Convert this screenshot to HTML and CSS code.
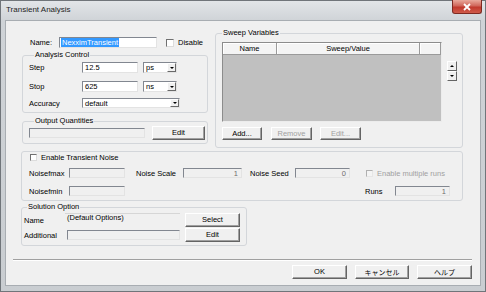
FILE: index.html
```html
<!DOCTYPE html>
<html>
<head>
<meta charset="utf-8">
<link rel="stylesheet" href="styles.css">
</head>
<body>
<div class="window">
  <div class="titlebar">
    <span class="title">Transient Analysis</span>
    <span class="close"><svg width="10" height="8" viewBox="0 0 10 8"><path d="M2 1 L8 7 M8 1 L2 7" stroke="#fff" stroke-width="1.8"/></svg></span>
  </div>
  <div class="client">
    <div class="top">
      <div class="leftcol">
        <div class="name-row">
          <span class="lbl name-lbl">Name:</span>
          <span class="input name-input"><span class="sel">NexximTransient</span></span>
          <span class="check cb-disable"></span><span class="check-lbl">Disable</span>
        </div>
        <div class="group analysis">
          <div class="legend">Analysis Control</div>
          <div class="row r-step"><span class="lbl w53">Step</span><span class="input w56">12.5</span><span class="select w34 ml5"><span class="val">ps</span><span class="arrow"><i></i></span></span></div>
          <div class="row r-stop"><span class="lbl w53">Stop</span><span class="input w56">625</span><span class="select w34 ml5"><span class="val">ns</span><span class="arrow"><i></i></span></span></div>
          <div class="row r-acc"><span class="lbl w53">Accuracy</span><span class="select w98"><span class="val">default</span><span class="arrow"><i></i></span></span></div>
        </div>
        <div class="group output">
          <div class="legend">Output Quantities</div>
          <div class="row r-out"><span class="input disabled w116"></span><span class="btn w53 ml7">Edit</span></div>
        </div>
      </div>
      <div class="group sweep">
        <div class="legend leg-sweep">Sweep Variables</div>
        <div class="table-row">
          <div class="table">
            <div class="thead"><span class="th c1">Name</span><span class="th c2">Sweep/Value</span><span class="th c3"></span></div>
            <div class="tbody"></div>
          </div>
          <div class="arrows">
            <span class="abtn"><i class="up"></i></span>
            <span class="abtn"><i class="down"></i></span>
          </div>
        </div>
        <div class="sweep-btns">
          <span class="btn w40">Add...</span>
          <span class="btn w41 ml9 dis">Remove</span>
          <span class="btn w41 ml8 dis">Edit...</span>
        </div>
      </div>
    </div>
    <div class="group noise">
      <div class="row r-tn"><span class="check"></span><span class="check-lbl">Enable Transient Noise</span></div>
      <div class="row r-n1">
        <span class="lbl w40">Noisefmax</span><span class="input disabled w56"></span>
        <span class="lbl w47 ml11">Noise Scale</span><span class="input disabled w59 num">1</span>
        <span class="lbl w45 ml8">Noise Seed</span><span class="input disabled w55 num">0</span>
        <span class="check dis ml16"></span><span class="check-lbl gray">Enable multiple runs</span>
      </div>
      <div class="row r-n2">
        <span class="lbl w40">Noisefmin</span><span class="input disabled w56"></span>
        <span class="lbl w30 ml240">Runs</span><span class="input disabled w55 num">1</span>
      </div>
    </div>
    <div class="group solution">
      <div class="legend leg-sol">Solution Option</div>
      <div class="row r-s1"><span class="lbl w41">Name</span><span class="field-plain w115">(Default Options)</span><span class="btn w55 ml5">Select</span></div>
      <div class="row r-s2"><span class="lbl w43">Additional</span><span class="input disabled w113"></span><span class="btn w55 ml5">Edit</span></div>
    </div>
    <div class="separator"></div>
    <div class="bottom-btns">
      <span class="btn w55">OK</span>
      <span class="btn w54 ml8 jp">キャンセル</span>
      <span class="btn w55 ml8 jp">ヘルプ</span>
    </div>
  </div>
</div>
</body>
</html>
```

FILE: styles.css
```css
* { box-sizing: border-box; margin: 0; padding: 0; }
html, body { width: 486px; height: 292px; overflow: hidden; }
body {
  font-family: "Liberation Sans", Arial, "Noto Sans CJK JP", sans-serif;
  font-size: 7.5px;
  color: #000;
  background: #fff;
}
.window {
  width: 486px;
  height: 292px;
  border: 1px solid #70757a;
  background: linear-gradient(#e2e5e8, #cfd3d7 20px, #c9cdd1);
  display: flex;
  flex-direction: column;
  padding: 0 5px 6px 5px;
}
.titlebar {
  height: 20px;
  display: flex;
  align-items: flex-start;
  flex-shrink: 0;
}
.title {
  font-size: 8px;
  line-height: 12px;
  padding-top: 3px;
  color: #1e1e1e;
}
.close {
  margin-left: auto;
  margin-right: -2px;
  margin-top: -1px;
  width: 30px;
  height: 14px;
  border: 1px solid #7e2a22;
  border-top: none;
  border-radius: 0 0 3px 3px;
  background: linear-gradient(#e9a99c, #d0665a 45%, #c1392d 55%, #cf5b4a);
  display: flex;
  align-items: center;
  justify-content: center;
}
.client {
  flex: 1;
  background: #f0f0f0;
  box-shadow: 0 0 0 1px #a8adb2;
  display: flex;
  flex-direction: column;
}
.top { display: flex; align-items: flex-start; padding-left: 16px; }
.leftcol { width: 186px; }
.name-row { margin-top: 16px; height: 11px; display: flex; align-items: center; }
.name-lbl { padding-left: 8px; width: 37px; }
.lbl { white-space: nowrap; flex-shrink: 0; }
.input {
  display: block;
  flex-shrink: 0;
  height: 11px;
  background: #fff;
  border: 1px solid;
  border-color: #828790 #e3e3e3 #e3e3e3 #828790;
  line-height: 9px;
  padding-left: 2px;
  white-space: nowrap;
  overflow: hidden;
}
.input.disabled { background: #f0f0f0; height: 10px; }
.input.num { text-align: right; padding-right: 3px; color: #6d6d6d; }
.name-input { width: 98px; padding-left: 1px; }
.sel { background: #3399ff; color: #fff; display: inline-block; line-height: 9px; padding: 0 1px; }
.check {
  display: block;
  flex-shrink: 0;
  width: 8px; height: 8px;
  background: #fff;
  border: 1px solid;
  border-color: #707070 #dcdcdc #dcdcdc #707070;
}
.check.dis { background: #f4f4f4; border-color: #b0b0b0 #e6e6e6 #e6e6e6 #b0b0b0; width: 7px; height: 7px; }
.cb-disable { margin-left: 9px; }
.check-lbl { margin-left: 4px; white-space: nowrap; }
.gray { color: #a0a0a0; }

.group {
  border: 1px solid #d3d6da;
  border-radius: 3px;
}
.legend {
  margin: -6px 0 0 5px;
  padding: 0 1px;
  background: #f0f0f0;
  width: fit-content;
  height: 10px;
  line-height: 10px;
  white-space: nowrap;
}
.analysis { margin-top: 7px; padding: 0 0 4px 6px; }
.row { display: flex; align-items: center; }
.r-step { margin-top: 2px; }
.r-stop { margin-top: 8px; }
.r-acc { margin-top: 6px; }
.r-acc .select { height: 10px; }
.select {
  display: flex;
  flex-shrink: 0;
  height: 11px;
  background: #fff;
  border: 1px solid;
  border-color: #828790 #e3e3e3 #e3e3e3 #828790;
}
.select .val { line-height: 9px; padding-left: 2px; }
.select .arrow {
  margin-left: auto;
  width: 9px;
  height: 100%;
  background: #f0f0f0;
  border: 1px solid;
  border-color: #fff #696969 #696969 #fff;
  display: flex;
  align-items: center;
  justify-content: center;
}
.select .arrow i, .abtn .down {
  display: block;
  width: 0; height: 0;
  border-left: 2px solid transparent;
  border-right: 2px solid transparent;
  border-top: 2px solid #000;
}
.abtn .up {
  display: block;
  width: 0; height: 0;
  border-left: 2px solid transparent;
  border-right: 2px solid transparent;
  border-bottom: 2px solid #000;
}
.output { margin-top: 8px; padding: 0 0 3px 6px; }
.r-out { margin-top: 0; height: 14px; }

.btn {
  display: flex;
  flex-shrink: 0;
  align-items: center;
  justify-content: center;
  height: 14px;
  background: #f0f0f0;
  border: 1px solid;
  border-color: #fff #646464 #646464 #fff;
  box-shadow: inset -1px -1px 0 #a0a0a0;
  white-space: nowrap;
  padding-bottom: 1px;
}
.btn.dis { color: #a0a0a0; }
.jp { font-family: "Noto Sans CJK JP", sans-serif; font-size: 7px; }

.sweep { margin-left: 7px; margin-top: 12px; width: 248px; height: 115px; padding-left: 6px; }
.leg-sweep { margin-left: 0; }
.table-row { display: flex; align-items: flex-start; margin-top: 4px; }
.table {
  width: 220px;
  border: 1px solid;
  border-color: #8c8c8c #ececec #ececec #8c8c8c;
}
.thead { display: flex; height: 12px; background: #f4f4f4; }
.th {
  display: flex; align-items: center; justify-content: center;
  border-right: 1px solid #9a9a9a;
  border-bottom: 1px solid #9a9a9a;
  box-shadow: inset 1px 1px 0 #fff;
  height: 12px;
}
.c1 { width: 54px; }
.c2 { width: 143px; }
.c3 { flex: 1; }
.tbody { height: 66px; background: #c0c0c0; }
.arrows { display: flex; flex-direction: column; margin-left: 5px; margin-top: 19px; }
.abtn {
  display: flex; align-items: center; justify-content: center;
  width: 10px; height: 10px;
  background: #f0f0f0;
  border: 1px solid;
  border-color: #fff #646464 #646464 #fff;
}
.sweep-btns { display: flex; margin-top: 5px; }
.sweep-btns .btn { height: 13px; }

.noise { margin: 3px 0 0 15px; width: 442px; height: 50px; padding-left: 8px; }
.r-tn { margin-top: 1px; height: 8px; }
.r-tn .check { width: 7px; height: 7px; }
.r-n1 { margin-top: 7px; margin-left: -1px; }
.r-n2 { margin-top: 8px; margin-left: -1px; }
.w30 { width: 30px; } .w40 { width: 40px; } .w41 { width: 41px; } .w43 { width: 43px; }
.w45 { width: 45px; } .w47 { width: 47px; } .w53 { width: 53px; } .w54 { width: 54px; }
.w55 { width: 55px; } .w56 { width: 56px; } .w59 { width: 59px; } .w34 { width: 34px; }
.w98 { width: 98px; } .w113 { width: 113px; } .w115 { width: 115px; } .w116 { width: 116px; }
.ml5 { margin-left: 5px; } .ml7 { margin-left: 7px; } .ml8 { margin-left: 8px; } .ml9 { margin-left: 9px; }
.ml11 { margin-left: 11px; } .ml16 { margin-left: 16px; } .ml240 { margin-left: 240px; }
.r-n1 .check-lbl { margin-left: 4px; }

.solution { margin: 6px 0 0 15px; width: 226px; height: 39px; padding: 0 0 2px 2px; }
.leg-sol { margin-left: 3px; }
.r-s1 { margin-top: 1px; height: 14px; }
.r-s2 { margin-top: 1px; height: 14px; }
.field-plain {
  display: block; height: 10px; line-height: 8px;
  border-top: 1px solid #d6d6d6;
  padding-left: 2px;
  white-space: nowrap;
  align-self: flex-start;
}
.separator {
  margin: 13px 0 0 7px;
  width: 459px;
  height: 2px;
  border-top: 1px solid #a0a0a0;
  border-bottom: 1px solid #fff;
}
.bottom-btns { display: flex; margin-top: 4px; padding-left: 286px; }
```
